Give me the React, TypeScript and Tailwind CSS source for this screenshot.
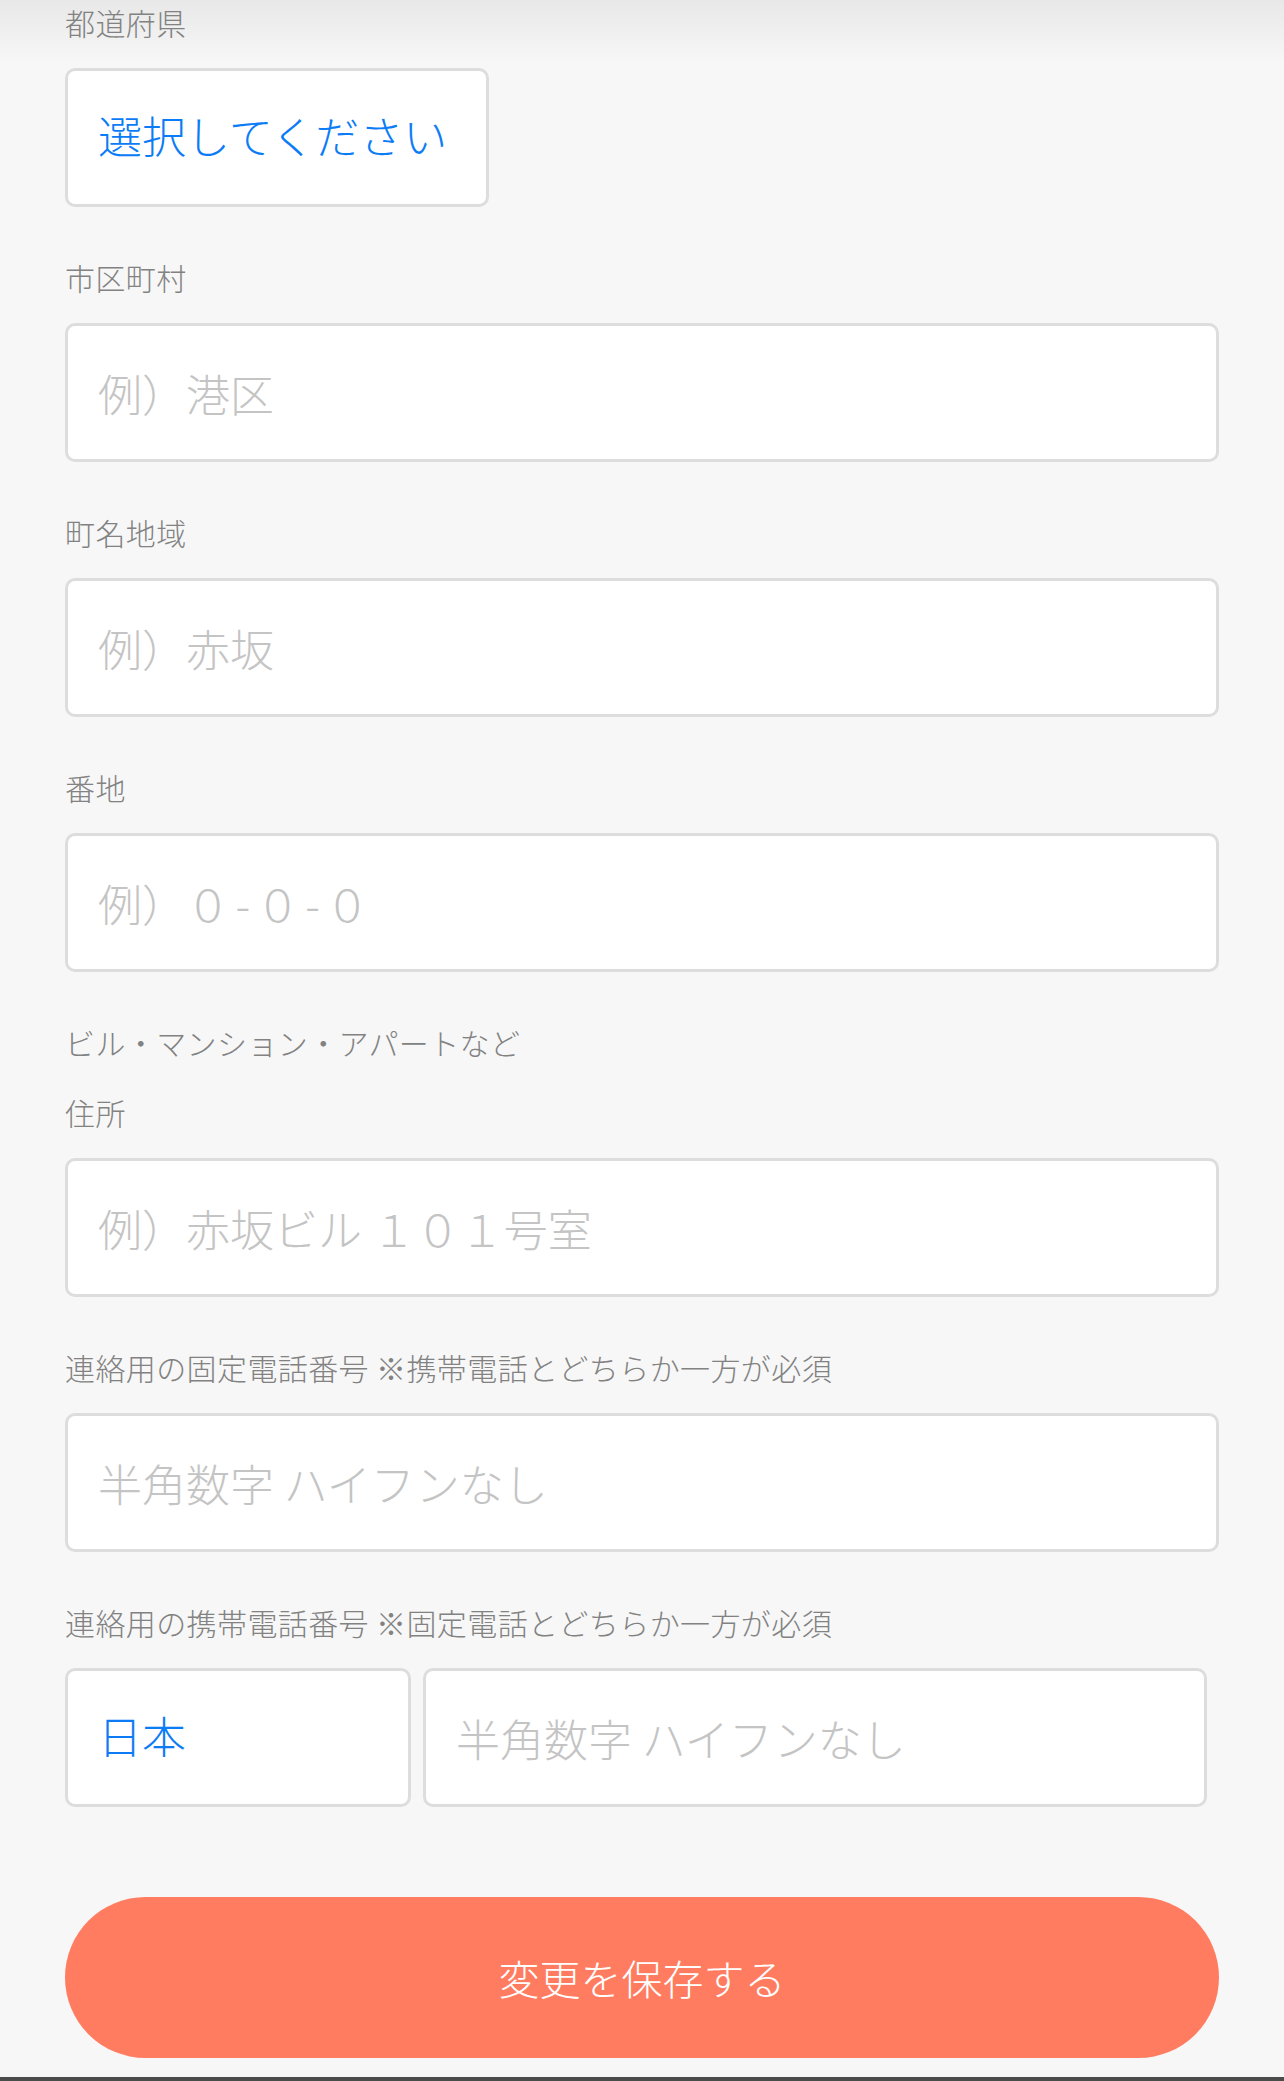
import type { ReactNode } from 'react';

const boxClass =
  'block w-full h-[139px] rounded-[10px] border-[3px] border-[#dddddd] bg-white px-[30px] text-[44px] leading-none outline-none';

function Field({ label, children, className = 'mb-[53px]' }: {
  label: string;
  children: ReactNode;
  className?: string;
}) {
  return (
    <div className={className}>
      <label className="mb-[23px] block h-[40px] text-[30px] leading-[35px] tracking-[0.4px] text-[#828282]">{label}</label>
      {children}
    </div>
  );
}

function TextInput({ placeholder }: { placeholder: string }) {
  return (
    <input
      type="text"
      placeholder={placeholder}
      className={`${boxClass} text-[#333333] placeholder:text-[#c4c4c4]`}
    />
  );
}

function SelectBox({ value, className }: { value: string; className: string }) {
  return (
    <select
      defaultValue={value}
      className={`${boxClass} ${className} appearance-none pb-[5px] text-[#0b7cf6]`}
    >
      <option value={value}>{value}</option>
    </select>
  );
}

export default function App() {
  return (
    <div className="flex h-[2081px] w-full flex-col bg-[linear-gradient(to_bottom,#e8e8e8_0px,#f7f7f7_64px)] font-['Noto_Sans_CJK_JP','Noto_Sans',sans-serif] font-light">
      <form className="flex flex-col px-[65px] pt-[5px]" onSubmit={(e) => e.preventDefault()}>
        <Field label="都道府県">
          <SelectBox value="選択してください" className="!w-[424px]" />
        </Field>

        <Field label="市区町村">
          <TextInput placeholder="例）港区" />
        </Field>

        <Field label="町名地域">
          <TextInput placeholder="例）赤坂" />
        </Field>

        <Field label="番地">
          <TextInput placeholder={'例）０\u200A\u200A-\u200A\u200A０\u200A\u200A-\u200A\u200A０'} />
        </Field>

        <p className="mb-[30px] h-[40px] text-[30px] leading-[35px] tracking-[0.4px] text-[#828282]">ビル・マンション・アパートなど</p>
        <Field label="住所">
          <TextInput placeholder="例）赤坂ビル １０１号室" />
        </Field>

        <Field label="連絡用の固定電話番号 ※携帯電話とどちらか一方が必須">
          <TextInput placeholder="半角数字 ハイフンなし" />
        </Field>

        <Field label="連絡用の携帯電話番号 ※固定電話とどちらか一方が必須" className="mb-[90px]">
          <div className="flex gap-[12px] pr-[12px]">
            <SelectBox value="日本" className="!w-[346px] shrink-0" />
            <div className="flex-1">
              <TextInput placeholder="半角数字 ハイフンなし" />
            </div>
          </div>
        </Field>

        <button
          type="submit"
          className="h-[161px] w-full rounded-full bg-[#ff7c61] text-[41px] text-white"
        >
          変更を保存する
        </button>
      </form>

      <div className="mt-auto h-[4px] bg-[#4b4b4b]" />
    </div>
  );
}
